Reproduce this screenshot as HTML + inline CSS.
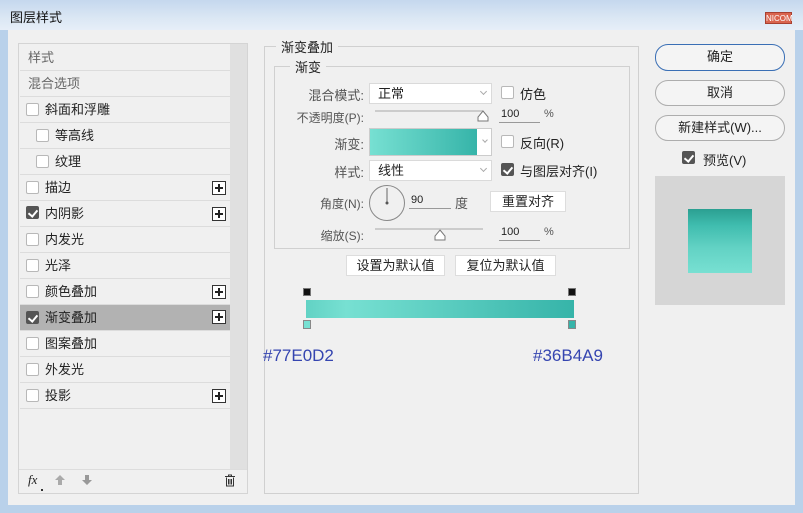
<!DOCTYPE html>
<html><head><meta charset="utf-8">
<style>
*{margin:0;padding:0;box-sizing:border-box}
body{width:803px;height:513px;overflow:hidden;background:#b9d1ea;font-family:"Liberation Sans","Noto Sans CJK SC",sans-serif;font-size:12px;color:#222;position:relative}
.a{position:absolute}
#title{left:0;top:0;width:803px;height:30px;background:linear-gradient(#c5d8ee,#dbe7f4 60%,#e6eef8);}
#body{left:8px;top:30px;width:787px;height:475px;background:#f0f0f0}
.cb{position:absolute;width:13px;height:13px;border:1px solid #b8b8b8;border-radius:2px;background:#fff}
.cb.on{background:#555;border-color:#555}
.cb.on:after{content:"";position:absolute;left:3px;top:1px;width:4px;height:7px;border:solid #fff;border-width:0 2px 2px 0;transform:rotate(40deg)}
.row{position:absolute;left:20px;width:210px;height:26px;border-bottom:1px solid #dcdcdc;line-height:26px;font-size:13px}
.plus{position:absolute;left:192px;top:6px;width:14px;height:14px;border:1px solid #333;background:#fff}
.plus:before{content:"";position:absolute;left:2px;top:5px;width:8px;height:2px;background:#222}
.plus:after{content:"";position:absolute;left:5px;top:2px;width:2px;height:8px;background:#222}
.btn{position:absolute;border:1px solid #adadad;border-radius:13px;background:#f4f4f4;text-align:center;line-height:24px;font-size:13px}
.sel{position:absolute;height:21px;border:1px solid #dadada;background:#fff;font-size:13px;line-height:19px;padding-left:8px}
.sel:after{content:"";position:absolute;right:5px;top:5px;width:4px;height:4px;border:solid #aaa;border-width:0 1px 1px 0;transform:rotate(45deg)}
.lbl{position:absolute;text-align:right;font-size:12px;color:#555}
.num{position:absolute;border-bottom:1px solid #999;font-size:11px;height:15px;padding-left:2px}
.sbtn{position:absolute;height:21px;border:1px solid #ddd;background:#fff;font-size:13px;text-align:center;line-height:19px}
</style></head><body>
<div class="a" id="title"></div>
<div class="a" style="left:10px;top:7px;font-size:13px;color:#111">图层样式</div>
<div class="a" style="left:765px;top:12px;width:27px;height:12px;background:#d9644e;color:#fff;font-size:8px;line-height:12px;text-align:center;border:1px solid #a84030">NICOM</div>
<div class="a" id="body"></div>

<div class="a" style="left:18px;top:43px;width:230px;height:451px;border:1px solid #d4d4d4;background:#f0f0f0"></div>
<div class="a" style="left:230px;top:44px;width:17px;height:425px;background:#e0e0e0"></div>
<div class="row" style="top:45px;padding-left:8px;color:#666">样式</div>
<div class="row" style="top:71px;padding-left:8px;color:#666">混合选项</div>
<div class="row" style="top:97px"><span class="cb" style="left:6px;top:6px"></span><span class="a" style="left:25px">斜面和浮雕</span></div>
<div class="row" style="top:123px"><span class="cb" style="left:16px;top:6px"></span><span class="a" style="left:35px">等高线</span></div>
<div class="row" style="top:149px"><span class="cb" style="left:16px;top:6px"></span><span class="a" style="left:35px">纹理</span></div>
<div class="row" style="top:175px"><span class="cb" style="left:6px;top:6px"></span><span class="a" style="left:25px">描边</span><span class="plus"></span></div>
<div class="row" style="top:201px"><span class="cb on" style="left:6px;top:5px"></span><span class="a" style="left:25px">内阴影</span><span class="plus"></span></div>
<div class="row" style="top:227px"><span class="cb" style="left:6px;top:6px"></span><span class="a" style="left:25px">内发光</span></div>
<div class="row" style="top:253px"><span class="cb" style="left:6px;top:6px"></span><span class="a" style="left:25px">光泽</span></div>
<div class="row" style="top:279px"><span class="cb" style="left:6px;top:6px"></span><span class="a" style="left:25px">颜色叠加</span><span class="plus"></span></div>
<div class="row" style="top:305px;background:#b2b2b2"><span class="cb on" style="left:6px;top:6px"></span><span class="a" style="left:25px">渐变叠加</span><span class="plus" style="top:5px"></span></div>
<div class="row" style="top:331px"><span class="cb" style="left:6px;top:6px"></span><span class="a" style="left:25px">图案叠加</span></div>
<div class="row" style="top:357px"><span class="cb" style="left:6px;top:6px"></span><span class="a" style="left:25px">外发光</span></div>
<div class="row" style="top:383px"><span class="cb" style="left:6px;top:6px"></span><span class="a" style="left:25px">投影</span><span class="plus"></span></div>
<div class="a" style="left:19px;top:469px;width:228px;height:1px;background:#ddd"></div>
<div class="a" style="left:28px;top:472px;font-style:italic;font-size:13px;font-family:'Liberation Serif',serif">fx</div>
<div class="a" style="left:41px;top:489px;width:2px;height:2px;background:#333"></div>
<svg class="a" style="left:54px;top:474px" width="12" height="12"><path d="M6 1L11 6H8V11H4V6H1Z" fill="#aaa"/></svg>
<svg class="a" style="left:81px;top:474px" width="12" height="12"><path d="M6 11L11 6H8V1H4V6H1Z" fill="#999"/></svg>
<svg class="a" style="left:224px;top:474px" width="12" height="13"><path d="M1 2.5H11M4.5 2.5V1H7.5V2.5M2.5 3.5V12H9.5V3.5M4.5 5V10.5M6 5V10.5M7.5 5V10.5" stroke="#333" fill="none" stroke-width="1"/></svg>

<div class="a" style="left:264px;top:46px;width:375px;height:448px;border:1px solid #d0d0d0"></div>
<div class="a" style="left:276px;top:37px;padding:0 5px;background:#f0f0f0;font-size:13px">渐变叠加</div>
<div class="a" style="left:274px;top:66px;width:356px;height:183px;border:1px solid #d0d0d0"></div>
<div class="a" style="left:290px;top:57px;padding:0 5px;background:#f0f0f0;font-size:13px">渐变</div>

<div class="lbl" style="left:280px;top:85px;width:84px;font-size:13px">混合模式:</div>
<div class="sel" style="left:369px;top:83px;width:123px">正常</div>
<span class="cb" style="left:501px;top:86px"></span><div class="a" style="left:520px;top:84px;font-size:13px">仿色</div>

<div class="lbl" style="left:280px;top:109px;width:84px">不透明度(P):</div>
<div class="a" style="left:375px;top:110px;width:108px;height:2px;background:#ccc"></div>
<svg class="a" style="left:476px;top:110px" width="14" height="12"><path d="M7 1L12 7V11H2V7Z" fill="#fff" stroke="#777"/></svg>
<div class="num" style="left:499px;top:108px;width:41px">100</div><div class="a" style="left:544px;top:108px;font-size:11px;color:#555">%</div>

<div class="lbl" style="left:280px;top:134px;width:84px;font-size:13px">渐变:</div>
<div class="a" style="left:369px;top:128px;width:123px;height:28px;border:1px solid #ccc;background:#fff"></div>
<div class="a" style="left:370px;top:129px;width:107px;height:26px;background:linear-gradient(90deg,#77e0d2,#36b4a9)"></div>
<div class="a" style="left:483px;top:138px;width:4px;height:4px;border:solid #aaa;border-width:0 1px 1px 0;transform:rotate(45deg)"></div>
<span class="cb" style="left:501px;top:135px"></span><div class="a" style="left:520px;top:133px;font-size:13px">反向(R)</div>

<div class="lbl" style="left:280px;top:162px;width:84px;font-size:13px">样式:</div>
<div class="sel" style="left:369px;top:160px;width:123px">线性</div>
<span class="cb on" style="left:501px;top:163px"></span><div class="a" style="left:520px;top:161px;font-size:13px">与图层对齐(I)</div>

<div class="lbl" style="left:280px;top:195px;width:84px">角度(N):</div>
<svg class="a" style="left:368px;top:184px" width="38" height="38"><circle cx="19" cy="19" r="17.5" fill="#f0f0f0" stroke="#888"/><path d="M19 4V19" stroke="#666"/><circle cx="19" cy="19" r="1.5" fill="#555"/></svg>
<div class="num" style="left:409px;top:194px;width:42px">90</div><div class="a" style="left:455px;top:193px;font-size:13px;color:#555">度</div>
<div class="sbtn" style="left:490px;top:191px;width:76px">重置对齐</div>

<div class="lbl" style="left:280px;top:227px;width:84px">缩放(S):</div>
<div class="a" style="left:375px;top:228px;width:108px;height:2px;background:#ccc"></div>
<svg class="a" style="left:433px;top:229px" width="14" height="12"><path d="M7 1L12 7V11H2V7Z" fill="#fff" stroke="#777"/></svg>
<div class="num" style="left:499px;top:226px;width:41px">100</div><div class="a" style="left:544px;top:226px;font-size:11px;color:#555">%</div>

<div class="sbtn" style="left:346px;top:255px;width:99px">设置为默认值</div>
<div class="sbtn" style="left:455px;top:255px;width:101px">复位为默认值</div>

<div class="a" style="left:306px;top:300px;width:268px;height:18px;background:linear-gradient(90deg,#62d2c4,#77e0d2 15%,#36b4a9)"></div>
<div class="a" style="left:303px;top:288px;width:8px;height:8px;background:#111;border:1px solid #777"></div>
<div class="a" style="left:568px;top:288px;width:8px;height:8px;background:#111;border:1px solid #777"></div>
<div class="a" style="left:303px;top:320px;width:8px;height:9px;background:#77e0d2;border:1px solid #888"></div>
<div class="a" style="left:568px;top:320px;width:8px;height:9px;background:#36b4a9;border:1px solid #888"></div>
<div class="a" style="left:263px;top:346px;font-size:17px;color:#3545b0">#77E0D2</div>
<div class="a" style="left:533px;top:346px;font-size:17px;color:#3545b0">#36B4A9</div>

<div class="btn" style="left:655px;top:44px;width:130px;height:27px;border-color:#3a6fb5">确定</div>
<div class="btn" style="left:655px;top:80px;width:130px;height:26px">取消</div>
<div class="btn" style="left:655px;top:115px;width:130px;height:26px">新建样式(W)...</div>
<span class="cb on" style="left:682px;top:151px"></span><div class="a" style="left:703px;top:150px;font-size:13px">预览(V)</div>
<div class="a" style="left:655px;top:176px;width:130px;height:129px;background:#d6d6d6"></div>
<div class="a" style="left:688px;top:209px;width:64px;height:64px;background:linear-gradient(#2b9f91,#3fbcae 25%,#62d2c4 60%,#78e0d2)"></div>
</body></html>
